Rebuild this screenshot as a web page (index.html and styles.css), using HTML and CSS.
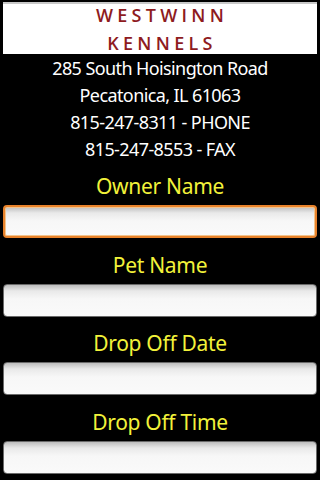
FILE: index.html
```html
<!DOCTYPE html>
<html>
<head>
  <title>Westwinn Kennels</title>
  <link rel="stylesheet" href="styles.css">
</head>
<body>
  <div class="header">
    <div class="brand">WESTWINN</div>
    <div class="brand">KENNELS</div>
  </div>
  <div class="address">
    <div>285 South Hoisington Road</div>
    <div>Pecatonica, IL 61063</div>
    <div>815-247-8311 - PHONE</div>
    <div>815-247-8553 - FAX</div>
  </div>
  <div class="form">
    <div class="form-group">
      <label for="owner">Owner Name</label>
      <input type="text" id="owner" class="focused">
    </div>
    <div class="form-group">
      <label for="pet">Pet Name</label>
      <input type="text" id="pet">
    </div>
    <div class="form-group">
      <label for="date">Drop Off Date</label>
      <input type="text" id="date">
    </div>
    <div class="form-group">
      <label for="time">Drop Off Time</label>
      <input type="text" id="time">
    </div>
  </div>
</body>
</html>
```

FILE: styles.css
```css
/* Westwinn Kennels drop off form */
body {
  margin: 0;
  background: #000;
  font-family: "Noto Sans", "Open Sans", sans-serif;
  overflow: hidden;
}

.header {
  display: flex;
  flex-direction: column;
  justify-content: center;
  margin: 2px 3px 0;
  height: 50px;
  background: #fff;
  border-top: 2px solid #c8c8c8;
  text-align: center;
}

.brand {
  color: #8e1b1e;
  font-family: "Open Sans", sans-serif;
  font-weight: 600;
  font-size: 18px;
  letter-spacing: 4.3px;
  line-height: 28px;
  padding-left: 4px;
}

.address {
  margin-top: 1px;
  color: #fff;
  font-size: 18px;
  letter-spacing: -0.6px;
  line-height: 27px;
  text-align: center;
}

.form {
  margin-top: 8px;
}

.form-group label {
  display: block;
  color: #f2f23a;
  font-size: 21px;
  letter-spacing: -0.3px;
  line-height: 30px;
  text-align: center;
}

.form-group input {
  display: block;
  box-sizing: border-box;
  width: 314px;
  height: 33px;
  margin: 4px 3px 11.5px;
  border: 1px solid #6a6a6a;
  border-radius: 4px;
  background: linear-gradient(#bdbdbd, #e9e9e9 6px, #f7f7f7 14px, #fafafa);
  outline: none;
}

.form-group input.focused {
  border: 2px solid #e8822b;
  box-shadow: inset 0 0 0 1px #f3c48d;
}
```
